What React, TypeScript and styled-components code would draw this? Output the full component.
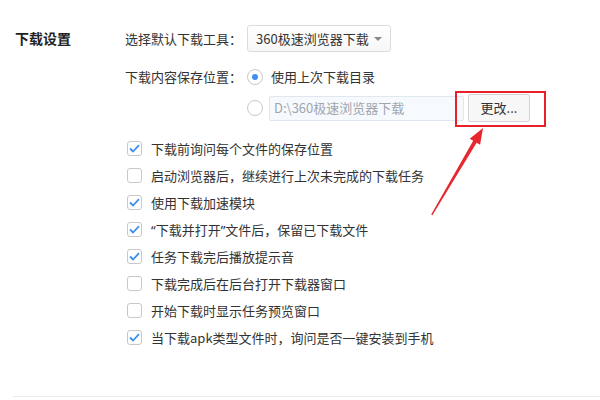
import React from "react";
import styled, { createGlobalStyle } from "styled-components";

const Global = createGlobalStyle`
  html, body { margin: 0; padding: 0; background: #fff; }
  body { font-family: "Noto Sans CJK SC", "Microsoft YaHei", sans-serif; color: #333; }
`;

const Page = styled.div`
  position: relative;
  width: 600px;
  height: 400px;
  overflow: hidden;
  background: #fff;
`;

const Section = styled.div`
  display: flex;
  padding-top: 25px;
`;

const Title = styled.div`
  width: 110px;
  padding-left: 15px;
  height: 27px;
  line-height: 27px;
  font-size: 14px;
  font-weight: bold;
  color: #222;
`;

const Body = styled.div`
  display: flex;
  flex-direction: column;
`;

const Row = styled.div<{ $mt?: number; $h: number }>`
  display: flex;
  align-items: center;
  height: ${(p) => p.$h}px;
  margin-top: ${(p) => p.$mt ?? 0}px;
  font-size: 13px;
  line-height: 16px;
`;

const Label = styled.span`
  width: 122px;
  color: #333;
  white-space: nowrap;
`;

const Indent = styled.span`
  width: 122px;
`;

const Select = styled.div`
  box-sizing: border-box;
  width: 144px;
  height: 27px;
  border: 1px solid #dcdcdc;
  border-radius: 3px;
  background: linear-gradient(#fff, #f7f7f7);
  display: flex;
  align-items: center;
  padding-left: 8px;
  padding-right: 8px;
  justify-content: space-between;
  color: #333;
`;

const Caret = styled.span`
  width: 0;
  height: 0;
  border-left: 4px solid transparent;
  border-right: 4px solid transparent;
  border-top: 4px solid #888;
  margin-top: 1px;
`;

const Radio = styled.span<{ $on?: boolean }>`
  box-sizing: border-box;
  width: 16px;
  height: 16px;
  border-radius: 50%;
  border: 1px solid #c9c9c9;
  display: flex;
  align-items: center;
  justify-content: center;
  margin-right: 8px;
  background: #fff;
  &::after {
    content: "";
    display: ${(p) => (p.$on ? "block" : "none")};
    width: 6px;
    height: 6px;
    border-radius: 50%;
    background: #3d8ef0;
  }
`;

const PathInput = styled.div`
  box-sizing: border-box;
  width: 195px;
  height: 25px;
  border: 1px solid #e1e7ef;
  background: #f6f9fd;
  border-radius: 2px;
  display: flex;
  align-items: center;
  padding-left: 4px;
  color: #a0a6ae;
  margin-left: -2px;
`;

const Button = styled.div`
  box-sizing: border-box;
  width: 62px;
  height: 28px;
  margin-left: 4px;
  border: 1px solid #d6d6d6;
  border-radius: 2px;
  background: #f7f7f7;
  display: flex;
  align-items: center;
  justify-content: center;
  color: #333;
`;

const CheckList = styled.div`
  display: flex;
  flex-direction: column;
  margin-top: 13px;
  margin-left: 2px;
`;

const CheckRow = styled.div`
  display: flex;
  align-items: center;
  height: 27px;
  font-size: 13px;
  line-height: 16px;
  color: #333;
`;

const Quote = styled.span`
  font-family: "Noto Sans", "Liberation Sans", sans-serif;
`;

const Box = styled.span`
  box-sizing: border-box;
  width: 15px;
  height: 15px;
  border: 1px solid #c8c8c8;
  border-radius: 3px;
  margin-right: 9px;
  display: flex;
  align-items: center;
  justify-content: center;
  background: #fff;
`;

const Divider = styled.div`
  position: absolute;
  left: 13px;
  right: 0;
  top: 396px;
  height: 1px;
  background: #ebebeb;
`;

const Highlight = styled.div`
  position: absolute;
  left: 455px;
  top: 91px;
  width: 91px;
  height: 36px;
  box-sizing: border-box;
  border: 2px solid #e8202a;
`;

const ArrowSvg = styled.svg`
  position: absolute;
  left: 0;
  top: 0;
`;

const items: [boolean, React.ReactNode, string][] = [
  [true, "下载前询问每个文件的保存位置", "a"],
  [false, "启动浏览器后，继续进行上次未完成的下载任务", "b"],
  [true, "使用下载加速模块", "c"],
  [
    true,
    <>
      <Quote>“</Quote>下载并打开<Quote>”</Quote>文件后，保留已下载文件
    </>,
    "d",
  ],
  [true, "任务下载完后播放提示音", "e"],
  [false, "下载完成后在后台打开下载器窗口", "f"],
  [false, "开始下载时显示任务预览窗口", "g"],
  [true, "当下载apk类型文件时，询问是否一键安装到手机", "h"],
];

const Check = () => (
  <svg width="11" height="9" viewBox="0 0 11 9">
    <path d="M1 4.5 L4 7.5 L10 1.2" fill="none" stroke="#3d8ef0" strokeWidth="1.8" />
  </svg>
);

export default function App() {
  return (
    <Page>
      <Global />
      <Section>
        <Title>下载设置</Title>
        <Body>
          <Row $h={27}>
            <Label>选择默认下载工具：</Label>
            <Select>
              <span>360极速浏览器下载</span>
              <Caret />
            </Select>
          </Row>
          <Row $h={24} $mt={13}>
            <Label>下载内容保存位置：</Label>
            <Radio $on />
            <span>使用上次下载目录</span>
          </Row>
          <Row $h={28} $mt={5}>
            <Indent />
            <Radio />
            <PathInput>D:\360极速浏览器下载</PathInput>
            <Button>更改...</Button>
          </Row>
          <CheckList>
            {items.map(([on, text, key]) => (
              <CheckRow key={key}>
                <Box>{on && <Check />}</Box>
                <span>{text}</span>
              </CheckRow>
            ))}
          </CheckList>
        </Body>
      </Section>
      <Divider />
      <Highlight />
      <ArrowSvg width="600" height="400" viewBox="0 0 600 400">
        <polygon
          points="431.2,214.6 473.2,140.8 469.7,138.8 483,128 480.1,144.8 476.6,142.8 432.4,215.3"
          fill="#e8262d"
        />
      </ArrowSvg>
    </Page>
  );
}
